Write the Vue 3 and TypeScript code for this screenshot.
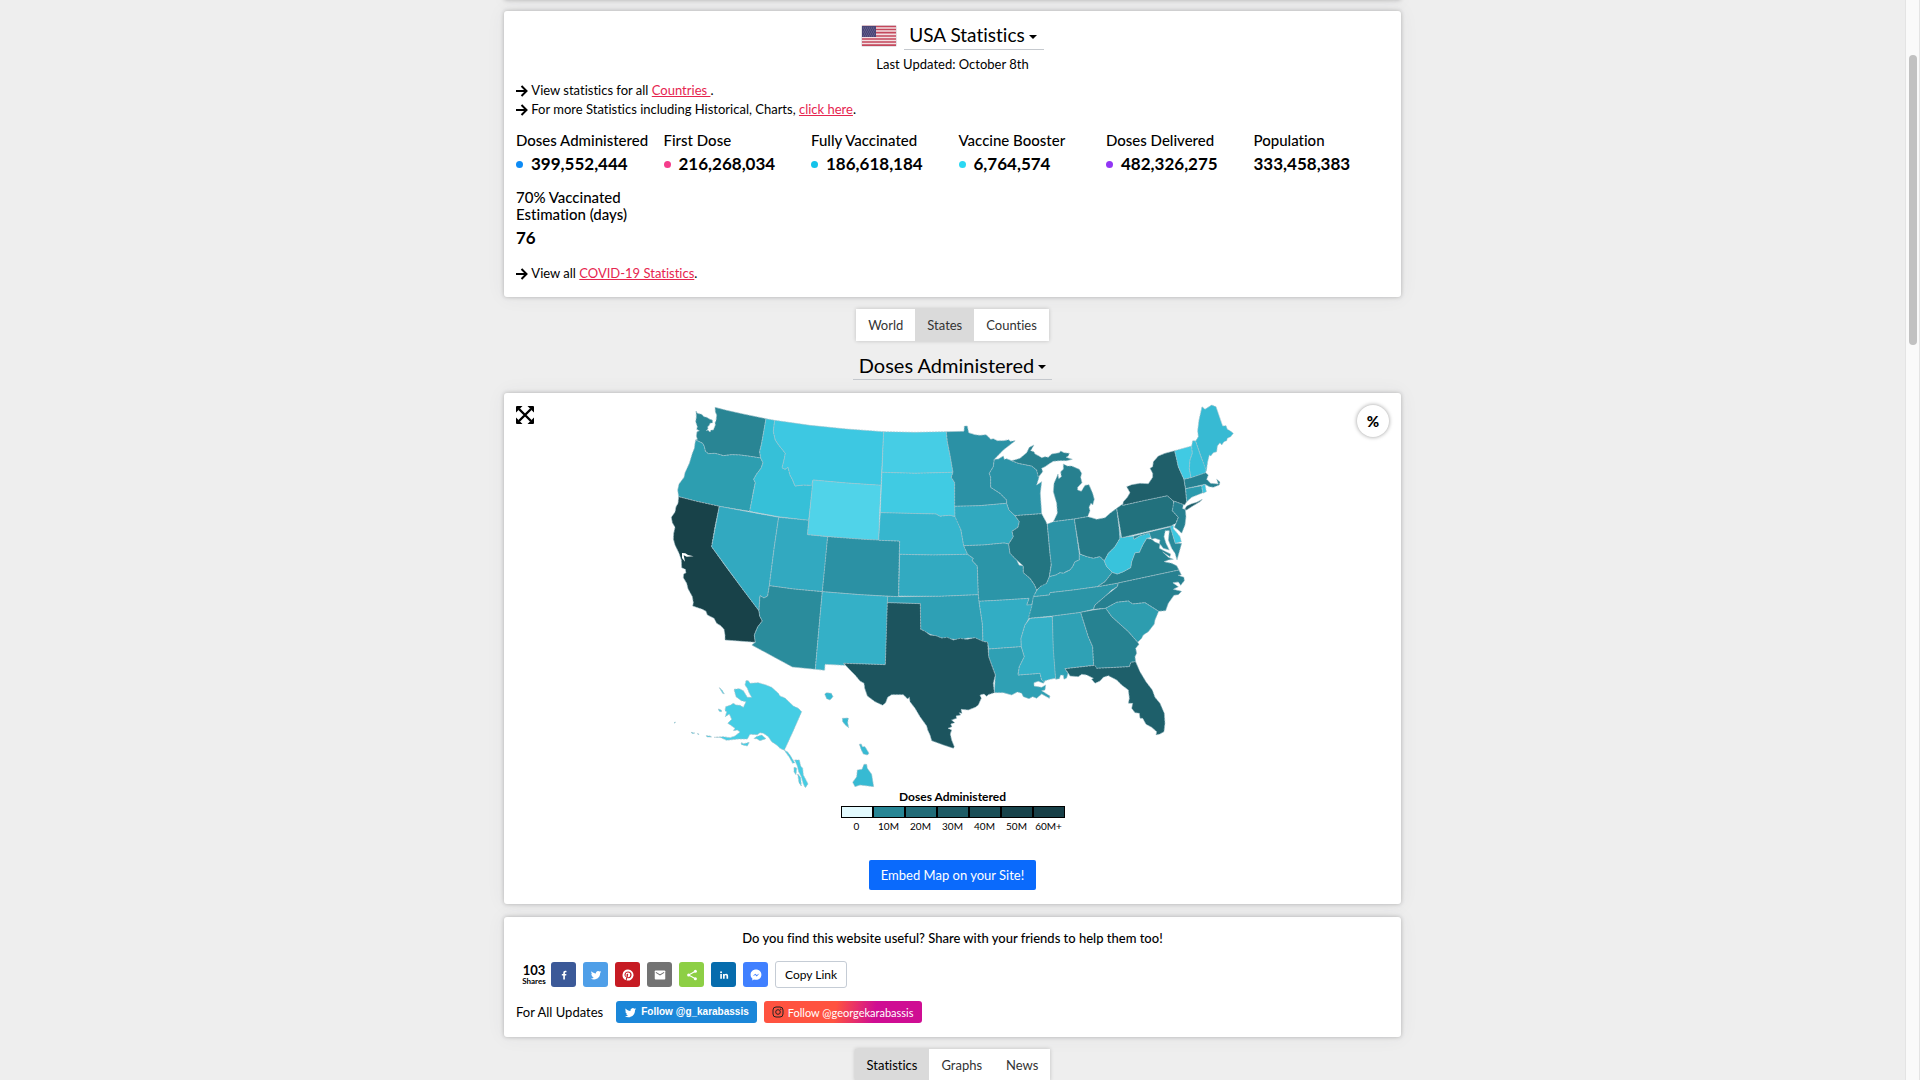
<script setup lang="ts">
import { ref } from 'vue'

interface Stat { label: string; value: string; dot?: string }
interface Shape { id: string; fill: string; d: string }
interface Region { x: number; y: number; shapes: Shape[] }

const stats: Stat[] = [
  { label: 'Doses Administered', value: '399,552,444', dot: '#0d8bf5' },
  { label: 'First Dose', value: '216,268,034', dot: '#f53d8c' },
  { label: 'Fully Vaccinated', value: '186,618,184', dot: '#14c3ea' },
  { label: 'Vaccine Booster', value: '6,764,574', dot: '#2bd8f3' },
  { label: 'Doses Delivered', value: '482,326,275', dot: '#9236f5' },
  { label: 'Population', value: '333,458,383' },
  { label: '70% Vaccinated Estimation (days)', value: '76' },
]

const legend = [
  { label: '0', color: '#e3fafe' },
  { label: '10M', color: '#268594' },
  { label: '20M', color: '#216b77' },
  { label: '30M', color: '#1e5b65' },
  { label: '40M', color: '#1a4e57' },
  { label: '50M', color: '#17434b' },
  { label: '60M+', color: '#173f47' },
]

const scope = ref('States')
const view = ref('Statistics')

const regions: Region[] = [
  {
    x: 0, y: 0,
    shapes: [
      { id: 'WA', fill: '#298594', d: 'M108,63 L112,70 125,73 132,80 140,82 150,88 157,90 158,98 150,100 148,106 143,110 144,116 139,122 144,120 150,127 153,120 160,120 166,105 165,98 168,92 170,75 166,66 165,52 L200,61 250,72 318,86 313,115 305,160 299,185 302,204 270,199 240,195 215,194 190,197 180,194 165,190 145,191 136,184 133,170 128,160 118,155 107,150 112,148 109,138 111,125 118,122 110,118 112,110 107,95 109,80Z' },
      { id: 'OR', fill: '#2d9eb0', d: 'M107,150 L118,155 128,160 133,170 136,184 145,191 165,190 180,194 190,197 215,194 240,195 270,199 302,204 309,218 303,235 290,252 281,268 286,278 280,305 275,335 269,364 178,349 110,334 56,320 53,300 57,282 72,262 75,248 88,220 97,190 103,175 105,160Z' },
      { id: 'CA', fill: '#184249', d: 'M56,320 L110,334 178,349 165,410 155,470 200,533 250,600 297,662 299,678 307,693 293,711 283,735 286,757 195,750 195,735 192,718 182,707 170,700 162,685 142,675 138,664 127,658 98,648 100,638 97,620 84,596 80,580 70,563 71,552 78,548 76,538 65,533 64,510 57,490 45,465 40,447 41,430 45,412 37,398 34,382 45,366 48,350 54,340Z' },
      { id: 'NV', fill: '#32a9c0', d: 'M178,349 L269,366 356,382 343,470 328,587 323,618 312,624 300,617 298,640 297,662 250,600 155,470Z' },
      { id: 'ID', fill: '#36c0d8', d: 'M318,86 L344,91 340,125 346,150 356,165 376,190 371,215 366,233 375,238 384,232 390,255 398,270 405,288 430,285 450,286 459,277 446,391 356,380 269,364 286,278 281,268 290,252 303,235 309,218 302,204 299,185 305,160 313,115Z' },
      { id: 'MT', fill: '#3dc8e2', d: 'M344,91 L450,106 560,117 671,125 667,205 663,286 560,279 459,270 455,286 430,285 405,288 398,270 390,255 384,232 375,238 366,233 371,215 376,190 356,165 346,150 340,125Z' },
      { id: 'WY', fill: '#50d3e9', d: 'M459,270 L560,279 663,286 659,360 656,451 550,444 442,434 450,360Z' },
      { id: 'UT', fill: '#32a9c0', d: 'M356,382 L446,391 442,434 503,440 496,520 487,605 400,597 328,587 343,470Z' },
      { id: 'CO', fill: '#2b91a4', d: 'M503,440 L610,448 719,453 717,530 716,620 600,614 487,605Z' },
      { id: 'AZ', fill: '#2a8c9c', d: 'M328,587 L400,597 487,605 480,680 466,838 397,831 340,800 275,765 286,757 283,735 293,711 307,693 299,678 297,662 300,617 312,624 323,618Z' },
      { id: 'NM', fill: '#34b0c7', d: 'M487,605 L600,614 683,619 681,720 676,824 551,820 554,826 495,823 494,841 466,838 480,680Z' },
    ],
  },
  {
    x: 600, y: 0,
    shapes: [
      { id: 'ND', fill: '#46cde5', d: 'M71,125 L165,127 259,125 262,155 270,195 279,247 165,250 66,247Z' },
      { id: 'SD', fill: '#40cbe3', d: 'M66,247 L165,250 279,247 274,262 284,278 285,380 270,376 255,377 240,379 228,372 140,370 61,368Z' },
      { id: 'NE', fill: '#36b6ce', d: 'M61,368 L140,370 228,372 240,379 255,377 270,376 285,380 292,390 303,420 311,465 323,493 220,495 118,493 119,453 56,451Z' },
      { id: 'KS', fill: '#32aac1', d: 'M119,493 L220,495 323,493 340,505 337,512 352,528 355,614 240,619 116,618Z' },
      { id: 'OK', fill: '#2ea0b5', d: 'M83,619 L116,620 240,619 355,614 358,640 367,700 369,755 345,744 325,744 300,750 245,744 210,733 182,718 181,641 82,638Z' },
      { id: 'MN', fill: '#2b91a5', d: 'M259,125 L312,124 313,108 322,108 326,128 345,134 360,136 378,134 385,140 392,148 400,146 412,152 430,152 447,149 450,154 466,152 430,180 403,208 400,230 388,250 392,262 392,292 420,310 440,330 440,340 360,347 284,349 284,278 274,262 279,247 270,195 262,155Z' },
      { id: 'IA', fill: '#31a9bf', d: 'M284,349 L360,347 440,340 447,360 465,377 478,395 474,412 456,424 460,440 446,462 432,459 370,465 311,467 303,420 285,380Z' },
      { id: 'MO', fill: '#2b95a8', d: 'M311,467 L370,465 432,459 446,462 450,490 470,510 477,525 490,528 490,548 510,565 524,585 530,600 522,620 515,645 500,645 507,625 430,630 357,634 355,614 352,528 337,512 340,505 323,493Z' },
      { id: 'AR', fill: '#32adc4', d: 'M357,634 L430,630 507,625 500,645 518,644 510,680 495,705 483,745 484,770 386,777 383,757 369,754 367,700Z' },
      { id: 'LA', fill: '#2fa0b4', d: 'M386,777 L484,770 493,800 478,830 474,855 540,850 545,870 555,873 550,880 535,874 522,878 522,888 545,892 557,885 555,900 545,902 570,918 568,925 545,912 538,918 530,925 518,920 507,926 490,920 485,910 472,906 455,915 430,908 403,908 406,855 395,825 386,800Z' },
      { id: 'MS', fill: '#34b1c8', d: 'M510,685 L577,680 580,760 587,865 570,868 550,874 545,870 540,850 474,855 478,830 493,800 484,770 483,745 495,705Z' },
      { id: 'TX', fill: '#1c545e', d: 'M82,638 L181,641 182,718 195,724 210,735 228,737 245,744 262,742 280,750 300,745 320,748 345,743 369,754 383,757 386,800 395,825 406,855 400,880 403,908 385,914 380,919 372,912 360,915 364,925 355,945 346,952 325,960 303,958 306,970 298,968 302,975 288,978 290,985 275,990 284,998 272,1002 276,1010 264,1015 275,1020 271,1032 275,1050 283,1070 280,1075 250,1065 215,1052 210,1035 203,1020 200,1008 180,980 165,955 150,935 148,922 143,927 130,914 95,914 83,922 77,938 68,946 45,935 22,918 14,895 12,880 0,873 -15,855 -30,840 -49,820 76,824Z' },
      { id: 'WI', fill: '#2b93a7', d: 'M403,208 L415,207 430,198 433,208 440,206 455,212 475,220 500,225 515,228 530,240 537,262 530,285 545,275 541,310 545,371 465,377 447,360 440,340 440,330 420,310 392,292 392,262 388,250 400,230Z' },
      { id: 'MI-N', fill: '#27808f', d: 'M455,212 L480,205 500,188 508,172 522,165 512,182 522,185 525,192 537,198 545,203 555,200 565,202 575,192 598,188 602,183 612,188 628,190 625,198 618,202 637,208 620,212 600,212 580,214 570,220 555,230 545,235 548,245 535,262 530,240 515,228 475,220Z' },
      { id: 'IL', fill: '#237581', d: 'M465,377 L545,371 558,395 562,405 570,490 574,520 568,560 562,575 555,590 542,590 530,600 524,585 510,565 490,548 490,528 470,510 450,490 446,462 460,440 456,424 474,412 478,395Z' },
    ],
  },
  {
    x: 1140, y: 0,
    shapes: [
      { id: 'AL', fill: '#2fa1b5', d: 'M37,678 L122,667 145,740 158,770 161,826 75,836 84,850 80,864 72,868 70,856 62,855 58,866 47,868 40,780Z' },
      { id: 'MI', fill: '#27808f', d: 'M70,222 L82,228 95,228 118,238 125,250 122,262 126,278 113,292 113,300 124,304 135,286 147,284 158,310 163,328 158,345 153,340 147,352 150,362 143,380 103,387 40,395 52,370 50,340 40,305 42,280 50,262 54,252 56,266 64,260 62,245 70,238Z' },
      { id: 'IN', fill: '#2b93a6', d: 'M22,402 L40,395 103,387 118,492 118,510 105,515 98,530 90,540 80,544 70,550 60,548 48,555 28,560 34,525 30,490Z' },
      { id: 'OH', fill: '#257a88', d: 'M103,387 L143,380 155,383 170,388 195,383 210,370 230,355 238,420 240,445 225,470 205,490 193,513 180,500 160,505 140,500 120,492Z' },
      { id: 'KY', fill: '#2d9fb2', d: 'M118,492 L140,500 160,505 180,500 193,513 200,530 217,547 195,575 172,590 100,600 30,608 28,615 -20,620 -10,602 0,590 20,580 28,560 48,555 60,548 70,550 90,540 98,530 105,515 118,510Z' },
      { id: 'TN', fill: '#2b95a7', d: 'M-20,620 L28,615 30,608 100,600 172,590 235,579 232,590 215,600 200,615 165,645 160,658 122,667 37,678 -35,685 -25,650Z' },
      { id: 'VA', fill: '#26808e', d: 'M217,547 L232,552 250,545 272,533 275,515 285,488 298,487 308,465 320,445 335,448 345,456 360,462 358,475 375,484 392,492 390,500 368,486 385,502 400,508 385,510 372,515 395,520 410,527 417,540 235,579 172,590 195,575Z' },
      { id: 'WV', fill: '#38c3dc', d: 'M238,420 L243,443 280,438 282,448 300,437 318,430 328,430 333,442 320,445 308,465 298,487 285,488 275,515 272,533 250,545 232,552 217,547 200,530 193,513 205,490 225,470 240,445Z' },
      { id: 'MD', fill: '#2a8a9b', d: 'M280,438 L393,410 400,440 406,460 425,460 418,485 411,510 405,490 395,475 385,450 388,422 376,422 372,440 378,460 388,480 370,475 358,460 360,450 345,445 335,448 328,430 300,437 282,448Z' },
      { id: 'DE', fill: '#3cc9e2', d: 'M390,408 L400,406 400,416 408,425 420,440 424,455 406,460Z' },
      { id: 'PA', fill: '#22717d', d: 'M230,355 L248,342 248,346 310,332 382,317 400,333 402,345 397,362 415,382 408,400 393,408 320,425 245,443Z' },
      { id: 'NJ', fill: '#268090', d: 'M402,333 L430,343 428,356 436,358 438,380 435,405 425,430 415,420 403,412 408,400 415,382 397,362Z' },
      { id: 'NY', fill: '#1f5f6a', d: 'M248,346 L250,335 262,322 270,308 260,290 275,284 300,280 325,281 338,262 338,250 330,235 338,230 340,215 355,198 375,190 404,182 410,205 415,230 432,268 437,300 440,335 434,345 402,333 400,333 382,317 310,332Z M434,358 L440,348 455,341 470,337 487,328 480,335 455,350 440,360Z' },
      { id: 'VT', fill: '#40cae3', d: 'M404,182 L455,168 457,190 450,210 448,235 453,263 432,268 415,230Z' },
      { id: 'NH', fill: '#39c0d9', d: 'M455,168 L458,152 467,153 485,205 499,235 497,250 453,263 448,235 450,210 457,190Z' },
      { id: 'ME', fill: '#37bad3', d: 'M467,153 L475,140 473,122 477,90 486,50 495,58 515,45 528,50 545,100 548,108 558,107 562,118 570,122 580,130 572,140 562,145 560,152 552,155 545,165 540,158 532,168 530,185 520,188 512,198 508,195 503,215 499,242 485,205Z' },
      { id: 'MA', fill: '#268090', d: 'M432,268 L453,263 497,248 505,255 500,268 512,280 535,282 530,268 540,276 538,285 520,292 508,290 495,283 437,296Z' },
      { id: 'CT', fill: '#2c9bae', d: 'M437,296 L485,287 489,308 455,322 440,335Z' },
      { id: 'RI', fill: '#3ac6df', d: 'M485,287 L495,283 499,305 489,310Z' },
      { id: 'NC', fill: '#268090', d: 'M235,579 L417,540 424,555 415,556 432,562 433,572 422,586 415,576 398,578 415,590 400,598 425,604 415,614 402,616 385,640 377,662 356,664 315,638 278,642 265,633 230,637 197,655 160,658 165,645 200,615 232,590Z' },
      { id: 'SC', fill: '#2d9daf', d: 'M197,655 L230,637 265,633 278,642 315,638 356,664 345,690 343,702 325,725 310,735 305,745 293,757 265,725 215,680Z' },
      { id: 'GA', fill: '#268291', d: 'M122,667 L160,660 197,655 215,680 265,725 293,757 297,763 287,775 290,790 285,800 287,815 273,817 268,830 170,835 161,826 158,770 145,740Z' },
      { id: 'FL', fill: '#1e5f6a', d: 'M75,836 L165,826 170,835 268,830 273,817 287,815 300,845 318,875 337,900 345,922 360,940 373,970 375,1000 372,1025 360,1032 348,1035 350,1025 335,1012 318,1003 308,985 300,985 298,970 285,968 275,955 278,940 265,940 268,925 265,900 245,885 230,870 205,857 190,862 180,873 165,880 155,868 160,865 140,855 125,853 115,860 90,858 84,848Z' },
    ],
  },
  {
    x: 0, y: 750,
    shapes: [
      { id: 'AK', fill: '#45cde4', d: 'M258,122 L265,122 270,130 295,128 318,135 335,142 355,160 360,168 375,174 400,198 415,205 425,215 400,272 373,331 360,325 350,315 335,305 325,290 318,285 310,280 300,278 292,284 270,283 262,297 235,297 200,301 180,292 163,292 190,290 210,293 225,288 240,276 232,270 220,272 225,265 207,252 203,250 215,238 208,222 196,230 200,215 195,212 197,200 212,195 220,190 228,195 240,196 250,202 258,185 244,182 228,170 222,148 238,146 250,152 262,172 275,172 268,160 262,145 255,135Z M282,296 L288,290 305,285 318,296 300,302 290,296Z M175,207 L184,210 184,216 177,213Z M178,143 L186,150 193,162 188,160Z M243,308 L252,311 268,307 262,318 245,314Z M138,287 L150,288 155,291 142,291Z M93,277 L104,279 98,281Z M112,281 L117,282 116,284Z M42,248 L46,246 45,250Z M373,331 L382,335 390,345 404,368 398,370 388,352Z M404,360 L418,360 422,378 428,385 430,405 438,420 444,432 436,443 430,432 424,410 416,395 412,378Z M402,382 L410,384 408,404 402,396Z M413,402 L422,412 424,438 417,428Z' },
      { id: 'HI', fill: '#37bad3', d: 'M494,162 L500,158 514,160 519,170 510,180 500,176Z M547,235 L565,234 563,248 566,263 556,255 548,245Z M598,313 L604,312 607,320 615,320 627,340 622,345 610,342 604,330Z M612,373 L620,373 622,385 635,403 641,440 625,438 600,435 585,440 578,427 590,410 592,390 606,388Z' },
    ],
  },
]
</script>

<template>
  <div class="page">
    <main class="column">
      <div class="card card-prev"></div>

      <section class="card summary">
        <div class="heading">
          <svg class="flag" viewBox="0 0 36 22" aria-hidden="true">
            <rect width="36" height="22" rx="2" fill="#e4e4e8" />
            <rect x="1" y="1" width="34" height="20" fill="#f3dfe2" />
            <path d="M1 1.500h34M1 4.500h34M1 7.700h34M1 11h34M1 14h34M1 17h34M1 20.200h34" stroke="#c4485c" stroke-width="1.700" />
            <rect x="1" y="1" width="14" height="11" fill="#4a4677" />
            <path d="M2 3h12M3 5h11M2 7h12M3 9h11M2 11h12" stroke="#8681a8" stroke-width=".7" stroke-dasharray="1 1" />
          </svg>
          <button type="button" class="picker picker-country">USA Statistics<i class="caret"></i></button>
        </div>
        <p class="updated">Last Updated: October 8th</p>
        <p class="line">
          <svg class="arrow" viewBox="0 0 12 12" aria-hidden="true"><path d="M0 6h10M5.500 1l5 5-5 5" /></svg>
          View statistics for all <a href="#countries">Countries&nbsp;</a>.
        </p>
        <p class="line">
          <svg class="arrow" viewBox="0 0 12 12" aria-hidden="true"><path d="M0 6h10M5.500 1l5 5-5 5" /></svg>
          For more Statistics including Historical, Charts, <a href="#charts">click here</a>.
        </p>
        <dl class="stats">
          <div v-for="s in stats" :key="s.label" class="stat">
            <dt>{{ s.label }}</dt>
            <dd><span v-if="s.dot" class="dot" :style="{ background: s.dot }"></span>{{ s.value }}</dd>
          </div>
        </dl>
        <p class="line">
          <svg class="arrow" viewBox="0 0 12 12" aria-hidden="true"><path d="M0 6h10M5.500 1l5 5-5 5" /></svg>
          View all <a href="#covid">COVID-19 Statistics</a>.
        </p>
      </section>

      <nav class="tabs">
        <button v-for="t in ['World', 'States', 'Counties']" :key="t" type="button" :class="{ on: scope === t }" @click="scope = t">{{ t }}</button>
      </nav>
      <button type="button" class="picker picker-metric">Doses Administered<i class="caret"></i></button>

      <section class="card map-card">
        <button type="button" class="expand" aria-label="Full screen">
          <svg viewBox="0 0 18 18" aria-hidden="true">
            <path d="M3 3l12 12M15 3L3 15" stroke="#000" stroke-width="2.400" />
            <path d="M1 0h5.500L0 6.500V1a1 1 0 0 1 1-1zM17 0h-5.500L18 6.500V1a1 1 0 0 0-1-1zM1 18h5.500L0 11.500V17a1 1 0 0 0 1 1zM17 18h-5.500l6.500-6.500V17a1 1 0 0 1-1 1z" />
          </svg>
        </button>
        <button type="button" class="percent">%</button>
        <svg class="map" viewBox="0 9 1755 1185" role="img" aria-label="Doses administered by state">
          <g v-for="(r, i) in regions" :key="i" :transform="`translate(${r.x} ${r.y})`">
            <path v-for="s in r.shapes" :key="s.id" class="state" :fill="s.fill" :d="s.d" />
          </g>
          <path class="water" d="M66,489 L76,490 84,495 101,499 80,500 71,496 75,515 66,504Z" />
        </svg>
        <div class="legend">
          <strong>Doses Administered</strong>
          <ul>
            <li v-for="l in legend" :key="l.label"><span class="swatch" :style="{ background: l.color }"></span>{{ l.label }}</li>
          </ul>
        </div>
        <button type="button" class="embed">Embed Map on your Site!</button>
      </section>

      <section class="card share">
        <p class="ask">Do you find this website useful? Share with your friends to help them too!</p>
        <div class="row">
          <div class="count"><b>103</b><span>Shares</span></div>
          <button type="button" class="net facebook" aria-label="Facebook">
            <svg viewBox="0 0 16 16"><path d="M9.200 14V8.700h1.700l.3-2H9.200V5.500c0-.6.3-1.100 1.100-1.100h1V2.600S10.500 2.400 9.700 2.400C8 2.400 7 3.400 7 5.200v1.500H5.100v2H7V14z" /></svg>
          </button>
          <button type="button" class="net twitter" aria-label="Twitter">
            <svg viewBox="0 0 24 24"><path d="M22.500 5.900c-.8.3-1.600.6-2.500.7.9-.5 1.600-1.400 1.900-2.400-.8.5-1.800.9-2.700 1A4.300 4.300 0 0 0 11.900 9C8.300 8.900 5.200 7.100 3.100 4.500c-1.100 2-.6 4.500 1.300 5.800-.7 0-1.400-.2-2-.5 0 2.100 1.400 3.900 3.500 4.300-.6.200-1.300.2-2 .1.600 1.700 2.200 3 4 3A8.700 8.700 0 0 1 1.500 19c1.900 1.200 4.200 1.900 6.600 1.900 8 0 12.500-6.800 12.200-12.900.9-.6 1.600-1.300 2.200-2.100z" /></svg>
          </button>
          <button type="button" class="net pinterest" aria-label="Pinterest">
            <svg viewBox="0 0 24 24"><path d="M12 1a11 11 0 0 0-4 21.200c-.1-.9-.2-2.200 0-3.200l1.300-5.400s-.3-.7-.3-1.600c0-1.500.9-2.700 2-2.700.9 0 1.400.7 1.400 1.500 0 1-.6 2.400-.9 3.700-.3 1.100.5 2 1.600 2 2 0 3.500-2.100 3.500-5 0-2.700-1.900-4.500-4.600-4.500a4.800 4.800 0 0 0-5 4.800c0 .9.400 2 .8 2.500.1.100.1.200.1.300l-.3 1.200c0 .2-.2.300-.4.200-1.400-.7-2.300-2.700-2.300-4.300 0-3.500 2.600-6.800 7.400-6.800 3.900 0 6.900 2.800 6.900 6.500 0 3.800-2.400 6.900-5.800 6.900-1.100 0-2.200-.6-2.500-1.300l-.7 2.600c-.3 1-.9 2.200-1.400 2.900A11 11 0 1 0 12 1z" /></svg>
          </button>
          <button type="button" class="net email" aria-label="Email">
            <svg viewBox="0 0 16 16"><rect x="1" y="2" width="14" height="12" rx="1" /><path d="M2.500 4.500L8 8l5.500-3.500" fill="none" stroke="#737373" stroke-width="1.400" /></svg>
          </button>
          <button type="button" class="net sharethis" aria-label="ShareThis">
            <svg viewBox="0 0 16 16"><circle cx="12.500" cy="3" r="2" /><circle cx="3.500" cy="8" r="2" /><circle cx="12.500" cy="13" r="2" /><path d="M12.500 3l-9 5 9 5" fill="none" stroke="#fff" stroke-width="1.400" /></svg>
          </button>
          <button type="button" class="net linkedin" aria-label="LinkedIn">
            <svg viewBox="0 0 16 16"><path d="M3 6.500h2.200V13H3zM6.700 6.500h2.100v.9c.4-.7 1.200-1.100 2.100-1.100 2 0 2.600 1.300 2.600 3.200V13h-2.200V9.800c0-.9-.2-1.600-1.100-1.600s-1.300.6-1.300 1.600V13H6.700z" /><circle cx="4.100" cy="4.300" r="1.300" /></svg>
          </button>
          <button type="button" class="net messenger" aria-label="Messenger">
            <svg viewBox="0 0 16 16"><path d="M8 .8C3.900.8.8 3.700.8 7.600c0 2.100.9 3.900 2.300 5.100v2.500l2.200-1.200c.8.3 1.700.4 2.700.4 4.100 0 7.200-2.900 7.200-6.800S12.100.8 8 .8z" /><path d="M3.500 9.800L7 6.200l2 1.900 3.500-2L9 9.900 7 8z" fill="#4080ff" /></svg>
          </button>
          <button type="button" class="copy">Copy Link</button>
        </div>
        <div class="row follow">
          <span>For All Updates</span>
          <a class="tw" href="#twitter">
            <svg viewBox="0 0 24 24"><path d="M22.500 5.900c-.8.3-1.600.6-2.500.7.9-.5 1.600-1.400 1.900-2.400-.8.5-1.800.9-2.700 1A4.300 4.300 0 0 0 11.900 9C8.300 8.900 5.200 7.100 3.100 4.500c-1.100 2-.6 4.500 1.300 5.800-.7 0-1.400-.2-2-.5 0 2.100 1.400 3.900 3.500 4.300-.6.200-1.300.2-2 .1.600 1.700 2.200 3 4 3A8.700 8.700 0 0 1 1.500 19c1.900 1.200 4.200 1.900 6.600 1.900 8 0 12.500-6.800 12.200-12.900.9-.6 1.600-1.300 2.200-2.100z" /></svg>
            Follow @g_karabassis
          </a>
          <a class="ig" href="#instagram">
            <svg viewBox="0 0 12 12"><rect x="1" y="1" width="10" height="10" rx="3" /><circle cx="6" cy="6" r="2.300" /><circle cx="8.800" cy="3.200" r=".3" /></svg>
            Follow @georgekarabassis
          </a>
        </div>
      </section>

      <nav class="tabs tabs-view">
        <button v-for="t in ['Statistics', 'Graphs', 'News']" :key="t" type="button" :class="{ on: view === t }" @click="view = t">{{ t }}</button>
      </nav>
    </main>
    <div class="scrollbar"><div class="thumb"></div></div>
  </div>
</template>

<style>
html,
body {
  margin: 0;
  height: 100%;
  overflow: hidden;
  background: #eee;
}
#app {
  height: 100%;
}
</style>

<style scoped>
.page {
  display: flex;
  height: 100%;
  overflow: hidden;
  color: #000;
  font: 13px/19px Lato, "Liberation Sans", sans-serif;
  font-variant-ligatures: none;
}
.column {
  flex: 1;
  display: flex;
  flex-direction: column;
  align-items: center;
  min-width: 0;
}
.column > * {
  flex-shrink: 0;
}
button {
  margin: 0;
  padding: 0;
  border: 0;
  background: none;
  font: inherit;
  font-variant-ligatures: none;
  color: inherit;
  cursor: pointer;
}
p {
  margin: 0;
}
.card {
  box-sizing: border-box;
  width: 100%;
  max-width: 897px;
  background: #fff;
  border-radius: 3px;
  box-shadow: 0 0 4px rgba(0, 0, 0, 0.25), 0 0 20px rgba(60, 64, 90, 0.06);
}
.card-prev {
  height: 10px;
  margin-top: -10px;
}
.summary {
  margin-top: 11px;
  padding: 10px 12px 14px;
}
.heading {
  display: flex;
  justify-content: center;
  align-items: center;
  gap: 7px;
}
.flag {
  width: 36px;
  height: 22px;
  margin-top: 1px;
}
.picker {
  display: flex;
  align-items: center;
  gap: 4px;
  box-sizing: border-box;
  border-bottom: 1px solid #c5c9ce;
  font-size: 20px;
  line-height: 28px;
}
.picker-country {
  padding: 0 7px 0 5px;
  font-size: 19px;
}
.caret {
  border: 4px solid transparent;
  border-top-color: #000;
  border-bottom: 0;
  margin-top: 4px;
}
.updated {
  margin-top: 5px;
  text-align: center;
}
.line {
  display: flex;
  align-items: center;
  white-space: pre-wrap;
}
.updated + .line {
  margin-top: 7px;
}
.arrow {
  width: 12px;
  height: 12px;
  fill: none;
  stroke: #000;
  stroke-width: 2;
}
.line a {
  color: #e6254f;
}
.stats {
  display: grid;
  grid-template-columns: repeat(6, minmax(0, 1fr));
  row-gap: 10px;
  margin: 13px -12px 11px 0;
}
.stat {
  padding-bottom: 4px;
}
.stats dt {
  font-size: 15px;
  font-weight: 500;
  line-height: 17px;
  padding-right: 8px;
}
.stats dd {
  display: flex;
  align-items: center;
  gap: 8px;
  margin: 4px 0 0;
  font-size: 17px;
  font-weight: 700;
  line-height: 22px;
}
.dot {
  width: 7px;
  height: 7px;
  border-radius: 50%;
}
.tabs {
  display: flex;
  margin-top: 12px;
  background: #fff;
  box-shadow: 0 0 4px rgba(0, 0, 0, 0.2);
}
.tabs button {
  padding: 0 12px;
  color: #333;
  line-height: 32px;
}
.tabs .on {
  background: #dadada;
}
.tabs-view .on {
  color: #000;
}
.picker-metric {
  margin-top: 10px;
  padding: 0 6px;
}
.map-card {
  position: relative;
  display: flex;
  flex-direction: column;
  align-items: center;
  margin-top: 13px;
  padding-bottom: 14px;
}
.expand {
  position: absolute;
  left: 12px;
  top: 13px;
  width: 18px;
  height: 18px;
}
.expand svg {
  display: block;
}
.percent {
  position: absolute;
  right: 12px;
  top: 12px;
  width: 32px;
  height: 32px;
  border-radius: 50%;
  background: #fff;
  box-shadow: 0 0 4px rgba(0, 0, 0, 0.4);
  font-size: 15px;
  font-weight: 900;
}
.map {
  width: 585px;
  max-width: 100%;
}
.state {
  stroke: #a5c3cb;
  stroke-width: 2;
  stroke-dasharray: 7 2;
  stroke-linejoin: round;
}
.water {
  fill: #fff;
}
.legend {
  text-align: center;
  font-size: 10px;
  line-height: 14px;
}
.legend strong {
  font-size: 12px;
  line-height: 18px;
}
.legend ul {
  display: flex;
  margin: 0;
  padding: 0;
  list-style: none;
}
.legend li {
  width: 32px;
}
.swatch {
  display: block;
  height: 10px;
  border: 1px solid #000;
  margin-bottom: 1px;
}
.embed {
  height: 30px;
  margin-top: 27px;
  padding: 0 12px;
  border-radius: 2px;
  background: #0a6afc;
  color: #fff;
}
.share {
  margin-top: 13px;
  padding: 12px 12px 14px;
}
.ask {
  text-align: center;
  font-weight: 500;
}
.row {
  display: flex;
  align-items: center;
  gap: 7px;
}
.share .row {
  margin-top: 13px;
}
.count {
  display: flex;
  flex-direction: column;
  width: 32px;
  margin-right: -6px;
  padding-left: 2px;
  text-align: center;
}
.count b {
  font-size: 13px;
  font-weight: 700;
  line-height: 13px;
}
.count span {
  font-size: 8px;
  font-weight: 700;
  line-height: 8px;
}
.net {
  display: flex;
  align-items: center;
  justify-content: center;
  width: 25px;
  height: 25px;
  border-radius: 3px;
}
.net svg {
  width: 12px;
  height: 12px;
  fill: #fff;
}
.facebook {
  background: #3b5998;
}
.twitter {
  background: #4f9fe8;
}
.pinterest {
  background: #c61b23;
}
.email {
  background: #737373;
}
.sharethis {
  background: #8dcf45;
}
.linkedin {
  background: #066cad;
}
.messenger {
  background: #4080ff;
}
.copy {
  box-sizing: border-box;
  height: 27px;
  padding: 0 9px;
  border: 1px solid #c5ccd5;
  border-radius: 3px;
  font-size: 12px;
}
.follow a {
  display: flex;
  align-items: center;
  box-sizing: border-box;
  height: 22px;
  padding: 0 8px;
  gap: 4px;
  border-radius: 3px;
  color: #fff;
  text-decoration: none;
}
.follow .tw {
  margin-left: 6px;
  background: #1b87d9;
  font: 700 10px/22px "Liberation Sans", sans-serif;
}
.tw svg {
  width: 13px;
  height: 13px;
  fill: #fff;
}
.ig {
  background: linear-gradient(100deg, #ff5340 45%, #cf0d93 70%);
  font-size: 11px;
}
.ig svg {
  width: 12px;
  height: 12px;
  fill: none;
  stroke: #222;
}
.scrollbar {
  box-sizing: border-box;
  width: 15px;
  padding: 55px 2px 0 3px;
  border: solid #e4e4e4;
  border-width: 0 1px;
  background: #fafafa;
}
.thumb {
  width: 8px;
  height: 290px;
  border-radius: 4px;
  background: #c1c1c1;
}
</style>
